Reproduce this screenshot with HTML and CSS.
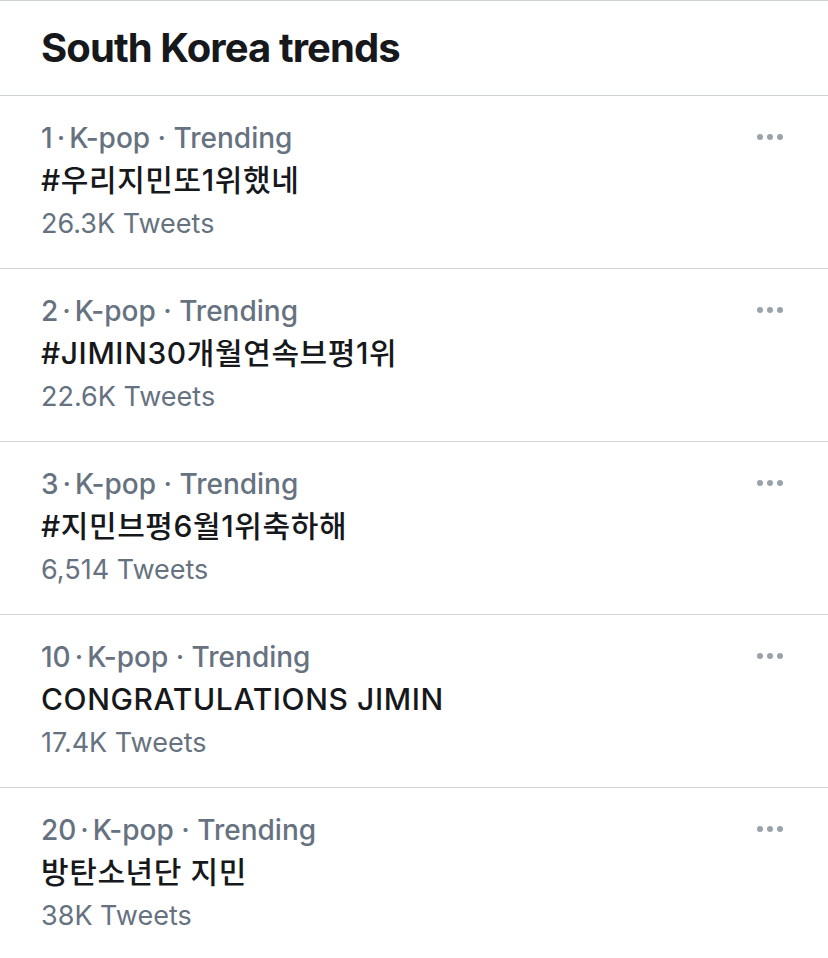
FILE: index.html
```html
<!DOCTYPE html>
<html lang="ko">
<head>
<meta charset="utf-8">
<title>South Korea trends</title>
<link rel="stylesheet" href="styles.css">
</head>
<body>
<div class="panel">
  <header class="head"><h1>South Korea trends</h1></header>
  <ul class="list">
    <li class="trend">
      <div class="info">
        <div class="meta">1<span class="dot">·</span>K-pop · Trending</div>
        <div class="title">#우리지민또1위했네</div>
        <div class="count">26.3K Tweets</div>
      </div>
      <svg class="more" viewBox="0 0 28 8" width="28" height="8"><circle cx="4" cy="4" r="3"/><circle cx="14" cy="4" r="3"/><circle cx="24" cy="4" r="3"/></svg>
    </li>
    <li class="trend">
      <div class="info">
        <div class="meta">2<span class="dot">·</span>K-pop · Trending</div>
        <div class="title">#JIMIN30개월연속브평1위</div>
        <div class="count">22.6K Tweets</div>
      </div>
      <svg class="more" viewBox="0 0 28 8" width="28" height="8"><circle cx="4" cy="4" r="3"/><circle cx="14" cy="4" r="3"/><circle cx="24" cy="4" r="3"/></svg>
    </li>
    <li class="trend">
      <div class="info">
        <div class="meta">3<span class="dot">·</span>K-pop · Trending</div>
        <div class="title">#지민브평6월1위축하해</div>
        <div class="count">6,514 Tweets</div>
      </div>
      <svg class="more" viewBox="0 0 28 8" width="28" height="8"><circle cx="4" cy="4" r="3"/><circle cx="14" cy="4" r="3"/><circle cx="24" cy="4" r="3"/></svg>
    </li>
    <li class="trend">
      <div class="info">
        <div class="meta">10<span class="dot">·</span>K-pop · Trending</div>
        <div class="title">CONGRATULATIONS JIMIN</div>
        <div class="count">17.4K Tweets</div>
      </div>
      <svg class="more" viewBox="0 0 28 8" width="28" height="8"><circle cx="4" cy="4" r="3"/><circle cx="14" cy="4" r="3"/><circle cx="24" cy="4" r="3"/></svg>
    </li>
    <li class="trend last">
      <div class="info">
        <div class="meta">20<span class="dot">·</span>K-pop · Trending</div>
        <div class="title">방탄소년단 지민</div>
        <div class="count">38K Tweets</div>
      </div>
      <svg class="more" viewBox="0 0 28 8" width="28" height="8"><circle cx="4" cy="4" r="3"/><circle cx="14" cy="4" r="3"/><circle cx="24" cy="4" r="3"/></svg>
    </li>
  </ul>
</div>
</body>
</html>
```
FILE: styles.css
```css
html, body {
  margin: 0;
  padding: 0;
  background: #ffffff;
}
body {
  font-family: Inter, "Noto Sans CJK KR", sans-serif;
  color: #14171a;
}
.panel {
  border-top: 1px solid #cfd2d5;
}
.head {
  height: 95px;
  box-sizing: border-box;
  padding: 23px 0 0 41px;
  border-bottom: 1px solid #cfd2d5;
}
.head h1 {
  margin: 0;
  font-size: 40px;
  line-height: 48px;
  font-weight: 700;
  letter-spacing: -0.9px;
  color: #16181b;
}
.list {
  list-style: none;
  margin: 0;
  padding: 0;
}
.trend {
  display: flex;
  justify-content: space-between;
  align-items: flex-start;
  padding: 20px 44px 20px 41px;
  height: 173px;
  box-sizing: border-box;
  border-bottom: 1px solid #d3d5d8;
}
.trend.last {
  border-bottom: none;
}
.info {
  display: flex;
  flex-direction: column;
}
.meta, .title, .count {
  white-space: nowrap;
}
.meta {
  font-size: 28px;
  line-height: 44px;
  color: #66727f;
  font-weight: 500;
}
.dot {
  margin: 0 4px;
}
.title {
  font-size: 30px;
  line-height: 40px;
  letter-spacing: 0.6px;
  color: #16181b;
  font-weight: 500;
}
.count {
  font-size: 27px;
  line-height: 48px;
  color: #66727f;
  font-weight: 400;
}
.more {
  margin-top: 17px;
  fill: #9aa2ab;
}
```
